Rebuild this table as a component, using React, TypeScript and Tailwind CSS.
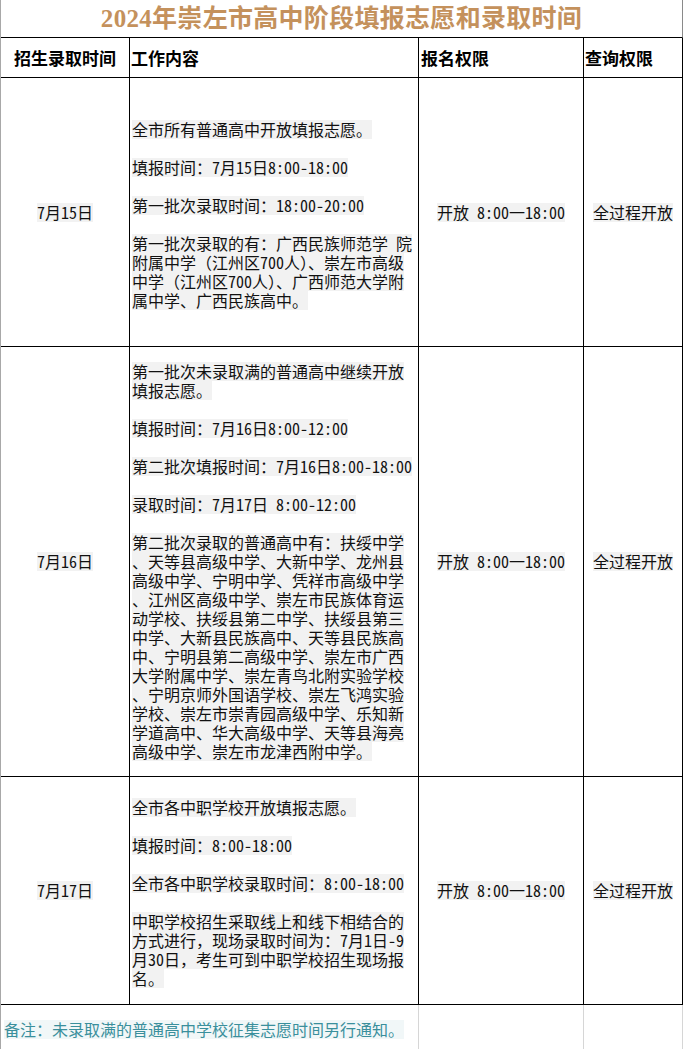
import React from "react";

const BODY_FONT =
  "font-['Noto_Sans_Mono_CJK_SC','Noto_Sans_CJK_SC','Noto_Sans',sans-serif]";

function Para({ lines }: { lines: string[] }) {
  return (
    <div className="mb-[19px] last:mb-0">
      {lines.map((l, i) => (
        <div key={i} className="whitespace-nowrap h-[19px]">
          <span className="inline-block h-[19px] leading-[19px] bg-[#f2f2f2] whitespace-pre">
            {l}
          </span>
        </div>
      ))}
    </div>
  );
}

function Row({
  date,
  height,
  paras,
  shift,
}: {
  date: string;
  height: string;
  paras: string[][];
  shift?: boolean;
}) {
  return (
    <div
      className={`grid grid-cols-[129px_289px_165px_99px] border-b border-black ${height}`}
    >
      <div className="flex items-center justify-center border-r border-black">
        <span className="inline-block leading-[19px] bg-[#f2f2f2]">{date}</span>
      </div>
      <div
        className={`flex flex-col justify-center border-r border-black pl-[2px] ${
          shift ? "pt-[5px]" : ""
        }`}
      >
        {paras.map((p, i) => (
          <Para key={i} lines={p} />
        ))}
      </div>
      <div className="flex items-center justify-center border-r border-black">
        <span className="inline-block leading-[19px] bg-[#f2f2f2] whitespace-pre">
          开放 8:00一18:00
        </span>
      </div>
      <div className="flex items-center justify-center border-r border-black">
        <span className="inline-block leading-[19px] bg-[#f2f2f2]">全过程开放</span>
      </div>
    </div>
  );
}

export default function App() {
  return (
    <div
      className={`w-[685px] h-[1049px] bg-white overflow-hidden text-[16px] leading-[19px] text-[#111] ${BODY_FONT}`}
    >
      <div className="w-[683px] h-[1049px] border-l border-[#a8a8a8]">
        {/* Title */}
        <div className="h-[38px] flex items-center justify-center border-b border-black border-r border-r-[#8a8a8a]">
          <span className="font-['Liberation_Serif','Noto_Sans_CJK_SC',serif] font-bold text-[25px] leading-[30px] text-[#c4915c] tracking-[0.3px]">
            2024年崇左市高中阶段填报志愿和录取时间
          </span>
        </div>

        {/* Header */}
        <div className="grid grid-cols-[129px_289px_165px_99px] h-[40px] border-b border-black font-['Noto_Sans_CJK_SC',sans-serif] font-bold text-[17px] text-black">
          <div className="flex items-center justify-center border-r border-black">
            招生录取时间
          </div>
          <div className="flex items-center pl-[1px] border-r border-black">
            工作内容
          </div>
          <div className="flex items-center pl-[2px] border-r border-black">
            报名权限
          </div>
          <div className="flex items-center pl-[1px] border-r border-black">
            查询权限
          </div>
        </div>

        <Row
          date="7月15日"
          height="h-[269px]"
          shift
          paras={[
            ["全市所有普通高中开放填报志愿。"],
            ["填报时间：7月15日8:00-18:00"],
            ["第一批次录取时间：18:00-20:00"],
            [
              "第一批次录取的有：广西民族师范学 院",
              "附属中学（江州区700人）、崇左市高级",
              "中学（江州区700人）、广西师范大学附",
              "属中学、广西民族高中。",
            ],
          ]}
        />

        <Row
          date="7月16日"
          height="h-[430px]"
          paras={[
            ["第一批次未录取满的普通高中继续开放", "填报志愿。"],
            ["填报时间：7月16日8:00-12:00"],
            ["第二批次填报时间：7月16日8:00-18:00"],
            ["录取时间：7月17日 8:00-12:00"],
            [
              "第二批次录取的普通高中有：扶绥中学",
              "、天等县高级中学、大新中学、龙州县",
              "高级中学、宁明中学、凭祥市高级中学",
              "、江州区高级中学、崇左市民族体育运",
              "动学校、扶绥县第二中学、扶绥县第三",
              "中学、大新县民族高中、天等县民族高",
              "中、宁明县第二高级中学、崇左市广西",
              "大学附属中学、崇左青鸟北附实验学校",
              "、宁明京师外国语学校、崇左飞鸿实验",
              "学校、崇左市崇青园高级中学、乐知新",
              "学道高中、华大高级中学、天等县海亮",
              "高级中学、崇左市龙津西附中学。",
            ],
          ]}
        />

        <Row
          date="7月17日"
          height="h-[228px]"
          shift
          paras={[
            ["全市各中职学校开放填报志愿。"],
            ["填报时间：8:00-18:00"],
            ["全市各中职学校录取时间：8:00-18:00"],
            [
              "中职学校招生采取线上和线下相结合的",
              "方式进行，现场录取时间为：7月1日-9",
              "月30日，考生可到中职学校招生现场报",
              "名。",
            ],
          ]}
        />

        {/* Footer */}
        <div className="grid grid-cols-[418px_165px_99px] h-[46px]">
          <div className="flex items-center pl-[3px] border-r border-[#d6d6d6] pt-[2px]">
            <span className="inline-block leading-[19px] whitespace-nowrap text-[#3a8f9c] bg-[#f1f7f8]">
              备注：未录取满的普通高中学校征集志愿时间另行通知。
            </span>
          </div>
          <div className="border-r border-[#d6d6d6]" />
          <div className="border-r border-[#d6d6d6]" />
        </div>
      </div>
    </div>
  );
}
